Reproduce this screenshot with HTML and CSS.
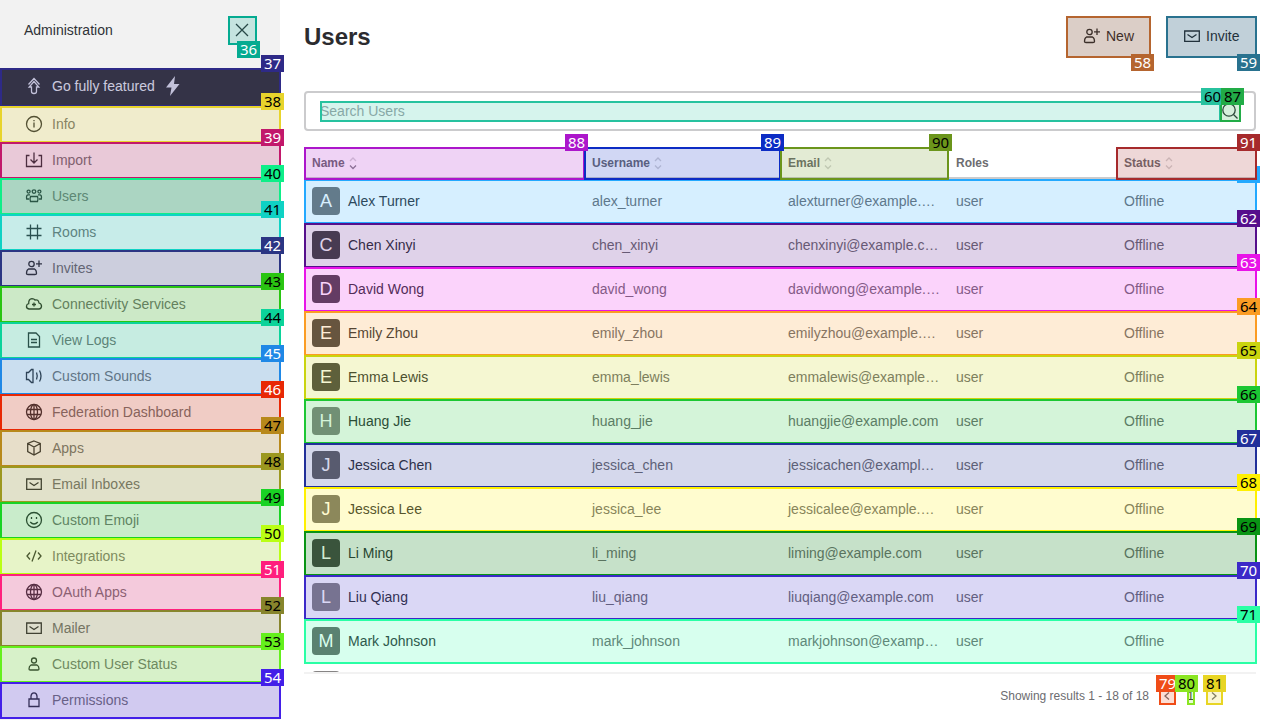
FILE: index.html
```html
<!DOCTYPE html>
<html lang="en">
<head>
<meta charset="utf-8">
<meta name="viewport" content="width=device-width, initial-scale=1">
<title>Users</title>
<link rel="stylesheet" href="styles.css">
</head>
<body>
<svg class="sprite" aria-hidden="true">
  <symbol id="close" viewBox="0 0 20 20"><path d="M4 4l12 12M16 4L4 16"/></symbol>
  <symbol id="upgrade" viewBox="0 0 20 20"><path d="M10 5.500l-4.800 5.500h2.300v4.500q0 2 2.500 2t2.500-2V11h2.300zM4.500 8.500L10 2.500l5.500 6"/></symbol>
  <symbol id="bolt" viewBox="0 0 20 20"><path class="solid" d="M12 0L3 11.500h5.500L7 20l9.500-12H11z"/></symbol>
  <symbol id="info" viewBox="0 0 20 20"><circle cx="10" cy="10" r="7.500"/><path d="M10 8.500v5M10 6v1.200"/></symbol>
  <symbol id="import" viewBox="0 0 20 20"><path d="M5.500 5.500H2.500v11h15v-11h-3M10 2.500v10.500M6.500 9.500L10 13l3.500-3.500"/></symbol>
  <symbol id="team" viewBox="0 0 20 20"><circle cx="4.600" cy="5.600" r="1.500"/><circle cx="10" cy="5.600" r="1.800"/><circle cx="15.400" cy="5.600" r="1.500"/><path d="M6.500 15.500q-1-2.500 0-5h7q1 2.500 0 5zM5 13H2.700Q2 9 4 8.800h2M15 13h2.300q.7-4-1.300-4.200h-2"/></symbol>
  <symbol id="hash" viewBox="0 0 20 20"><path d="M6.500 2.500v15M13.500 2.500v15M2.500 6.500h15M2.500 13.500h15"/></symbol>
  <symbol id="user-plus" viewBox="0 0 20 20"><circle cx="7.500" cy="6" r="2.700"/><path d="M4.500 11h6q2 1 2 4.500 0 1-1.500 1H4q-1.500 0-1.500-1Q2.500 12 4.500 11zM15 2.500v6.500M12 5.800h6"/></symbol>
  <symbol id="cloud" viewBox="0 0 20 20"><path d="M5 15Q2.200 14.500 2.500 12q.2-2 2.200-2.400Q4.500 5 8 4.700q2 0 3 1.300 3.300-.8 4 3 2.700.8 2.500 3.500-.5 2.500-2.500 2.500zM10 8.500v4M8 10.500h4"/></symbol>
  <symbol id="doc" viewBox="0 0 20 20"><path d="M4.500 3h7.500l3.500 3.500V17h-11zM7 9.500h6M7 12.500h6"/></symbol>
  <symbol id="sound" viewBox="0 0 20 20"><path d="M2.500 6.500h2L7.500 3.500H9v13H7.500l-3-3h-2zM12.500 6.500q1.500 3.500 0 7M15.500 4.500q3 5.500 0 11"/></symbol>
  <symbol id="globe" viewBox="0 0 20 20"><circle cx="10" cy="10" r="7.500"/><ellipse cx="10" cy="10" rx="3.500" ry="7.500"/><path d="M3 7.500h14M3 12.500h14M10 2.500v15"/></symbol>
  <symbol id="cube" viewBox="0 0 20 20"><path d="M10 3l6.300 2.500v8L10 17l-6.300-3.500v-8zM3.700 5.500L10 9l6.300-3.500M10 9v8"/></symbol>
  <symbol id="mail" viewBox="0 0 20 20"><path d="M2.700 5h14.600v10.300H2.700zM5.500 8.500l4.500 3 4.500-3"/></symbol>
  <symbol id="smile" viewBox="0 0 20 20"><circle cx="10" cy="10" r="7.500"/><path d="M7.500 7v2M12.500 7v2M6.200 12q3.800 4 7.600 0"/></symbol>
  <symbol id="code" viewBox="0 0 20 20"><path d="M6 6.500L3 10l3 3.500M14 6.500l3 3.500-3 3.500M12 4.500l-4 11"/></symbol>
  <symbol id="user" viewBox="0 0 20 20"><circle cx="10" cy="6.500" r="2.500"/><path d="M7 11h6q2 1 2 4 0 1-1.200 1H6.200Q5 16 5 15q0-3 2-4z"/></symbol>
  <symbol id="lock" viewBox="0 0 20 20"><path d="M5 9h10v7.500H5zM7 9V6q.3-3.200 3-3.200T13 6v3"/></symbol>
  <symbol id="search" viewBox="0 0 20 20"><circle cx="9" cy="9" r="6.200"/><path d="M13.500 13.500l4 4"/></symbol>
  <symbol id="left" viewBox="0 0 16 16"><path d="M10 4.500L6 8l4 3.500"/></symbol>
  <symbol id="right" viewBox="0 0 16 16"><path d="M6 4.500L10 8l-4 3.500"/></symbol>
  <symbol id="sort-up" viewBox="0 0 16 16"><path d="M5 6l3-3 3 3"/></symbol>
  <symbol id="sort-down" viewBox="0 0 16 16"><path d="M5 10.500l3 3 3-3"/></symbol>
</svg>

<aside class="sidebar">
  <header class="sidebar-head">
    <span>Administration</span>
    <button class="close mark mark-below m36" type="button" aria-label="Close"><svg class="icon"><use href="#close"/></svg><span class="tag">36</span></button>
  </header>
  <nav class="menu">
    <a href="#" class="item upgrade mark m37"><svg class="icon"><use href="#upgrade"/></svg>Go fully featured<svg class="icon"><use href="#bolt"/></svg><span class="tag">37</span></a>
    <a href="#" class="item mark m38"><svg class="icon"><use href="#info"/></svg>Info<span class="tag">38</span></a>
    <a href="#" class="item mark m39"><svg class="icon"><use href="#import"/></svg>Import<span class="tag">39</span></a>
    <a href="#" class="item active mark m40" aria-current="page"><svg class="icon"><use href="#team"/></svg>Users<span class="tag">40</span></a>
    <a href="#" class="item mark m41"><svg class="icon"><use href="#hash"/></svg>Rooms<span class="tag">41</span></a>
    <a href="#" class="item mark m42"><svg class="icon"><use href="#user-plus"/></svg>Invites<span class="tag">42</span></a>
    <a href="#" class="item mark m43"><svg class="icon"><use href="#cloud"/></svg>Connectivity Services<span class="tag">43</span></a>
    <a href="#" class="item mark m44"><svg class="icon"><use href="#doc"/></svg>View Logs<span class="tag">44</span></a>
    <a href="#" class="item mark m45"><svg class="icon"><use href="#sound"/></svg>Custom Sounds<span class="tag">45</span></a>
    <a href="#" class="item mark m46"><svg class="icon"><use href="#globe"/></svg>Federation Dashboard<span class="tag">46</span></a>
    <a href="#" class="item mark m47"><svg class="icon"><use href="#cube"/></svg>Apps<span class="tag">47</span></a>
    <a href="#" class="item mark m48"><svg class="icon"><use href="#mail"/></svg>Email Inboxes<span class="tag">48</span></a>
    <a href="#" class="item mark m49"><svg class="icon"><use href="#smile"/></svg>Custom Emoji<span class="tag">49</span></a>
    <a href="#" class="item mark m50"><svg class="icon"><use href="#code"/></svg>Integrations<span class="tag">50</span></a>
    <a href="#" class="item mark m51"><svg class="icon"><use href="#globe"/></svg>OAuth Apps<span class="tag">51</span></a>
    <a href="#" class="item mark m52"><svg class="icon"><use href="#mail"/></svg>Mailer<span class="tag">52</span></a>
    <a href="#" class="item mark m53"><svg class="icon"><use href="#user"/></svg>Custom User Status<span class="tag">53</span></a>
    <a href="#" class="item mark m54"><svg class="icon"><use href="#lock"/></svg>Permissions<span class="tag">54</span></a>
  </nav>
</aside>

<main class="page">
  <header class="page-head">
    <h1>Users</h1>
    <div class="actions">
      <button class="action mark mark-below m58" type="button"><svg class="icon"><use href="#user-plus"/></svg>New<span class="tag">58</span></button>
      <button class="action invite mark mark-below m59" type="button"><svg class="icon"><use href="#mail"/></svg>Invite<span class="tag">59</span></button>
    </div>
  </header>

  <div class="search">
    <span class="search-field mark m60"><input type="text" placeholder="Search Users" aria-label="Search Users"><span class="tag">60</span></span>
    <span class="search-icon mark m87"><svg class="icon"><use href="#search"/></svg><span class="tag">87</span></span>
  </div>

  <div class="results">
    <table>
      <colgroup><col class="c-name"><col class="c-username"><col class="c-email"><col class="c-roles"><col class="c-status"></colgroup>
      <thead>
        <tr>
          <th class="mark m88 sorted">Name<svg class="sort"><use href="#sort-up"/><use class="down" href="#sort-down"/></svg><span class="tag">88</span></th>
          <th class="mark m89">Username<svg class="sort"><use href="#sort-up"/><use class="down" href="#sort-down"/></svg><span class="tag">89</span></th>
          <th class="mark m90">Email<svg class="sort"><use href="#sort-up"/><use class="down" href="#sort-down"/></svg><span class="tag">90</span></th>
          <th>Roles</th>
          <th class="mark m91">Status<svg class="sort"><use href="#sort-up"/><use class="down" href="#sort-down"/></svg><span class="tag">91</span></th>
        </tr>
      </thead>
      <tbody>
        <tr class="mark m61"><td><div class="person"><span class="avatar tone-e">A</span>Alex Turner</div></td><td>alex_turner</td><td>alexturner@example.com</td><td>user</td><td>Offline<span class="tag">61</span></td></tr>
        <tr class="mark m62"><td><div class="person"><span class="avatar tone-a">C</span>Chen Xinyi</div></td><td>chen_xinyi</td><td>chenxinyi@example.com</td><td>user</td><td>Offline<span class="tag">62</span></td></tr>
        <tr class="mark m63"><td><div class="person"><span class="avatar tone-a">D</span>David Wong</div></td><td>david_wong</td><td>davidwong@example.com</td><td>user</td><td>Offline<span class="tag">63</span></td></tr>
        <tr class="mark m64"><td><div class="person"><span class="avatar tone-a">E</span>Emily Zhou</div></td><td>emily_zhou</td><td>emilyzhou@example.com</td><td>user</td><td>Offline<span class="tag">64</span></td></tr>
        <tr class="mark m65"><td><div class="person"><span class="avatar tone-a">E</span>Emma Lewis</div></td><td>emma_lewis</td><td>emmalewis@example.com</td><td>user</td><td>Offline<span class="tag">65</span></td></tr>
        <tr class="mark m66"><td><div class="person"><span class="avatar tone-f">H</span>Huang Jie</div></td><td>huang_jie</td><td>huangjie@example.com</td><td>user</td><td>Offline<span class="tag">66</span></td></tr>
        <tr class="mark m67"><td><div class="person"><span class="avatar tone-d">J</span>Jessica Chen</div></td><td>jessica_chen</td><td>jessicachen@example.com</td><td>user</td><td>Offline<span class="tag">67</span></td></tr>
        <tr class="mark m68"><td><div class="person"><span class="avatar tone-e">J</span>Jessica Lee</div></td><td>jessica_lee</td><td>jessicalee@example.com</td><td>user</td><td>Offline<span class="tag">68</span></td></tr>
        <tr class="mark m69 focused"><td><div class="person"><span class="avatar tone-a">L</span>Li Ming</div></td><td>li_ming</td><td>liming@example.com</td><td>user</td><td>Offline<span class="tag">69</span></td></tr>
        <tr class="mark m70"><td><div class="person"><span class="avatar tone-f">L</span>Liu Qiang</div></td><td>liu_qiang</td><td>liuqiang@example.com</td><td>user</td><td>Offline<span class="tag">70</span></td></tr>
        <tr class="mark m71"><td><div class="person"><span class="avatar tone-d">M</span>Mark Johnson</div></td><td>mark_johnson</td><td>markjohnson@example.com</td><td>user</td><td>Offline<span class="tag">71</span></td></tr>
        <tr><td><div class="person"><span class="avatar tone-f"></span></div></td><td></td><td></td><td></td><td></td></tr>
      </tbody>
    </table>
  </div>

  <footer class="pager">
    <span>Showing results 1 - 18 of 18</span>
    <nav class="pages" aria-label="Pagination">
      <button class="mark m79" type="button" aria-label="Previous"><svg class="chevron"><use href="#left"/></svg><span class="tag">79</span></button>
      <button class="current mark m80" type="button">1<span class="tag">80</span></button>
      <button class="mark m81" type="button" aria-label="Next"><svg class="chevron"><use href="#right"/></svg><span class="tag">81</span></button>
    </nav>
  </footer>
</main>
</body>
</html>
```
FILE: styles.css
```css
* { box-sizing: border-box; }

body {
  margin: 0;
  height: 100vh;
  display: flex;
  overflow: hidden;
  background: #fff;
  color: #2f3237;
  font: 14px/20px "Liberation Sans", Arial, sans-serif;
}

button, input { font: inherit; color: inherit; margin: 0; padding: 0; border: 0; background: none; }
a { color: inherit; text-decoration: none; }

.sprite { position: absolute; width: 0; height: 0; }
.icon, .sort, .chevron { flex: none; fill: none; stroke: currentColor; stroke-width: 1.3; }
.icon { width: 20px; height: 20px; }
.solid { fill: currentColor; stroke: none; }

/* Numbered outlines */
.mark { position: relative; }
.mark::after {
  content: "";
  position: absolute;
  inset: 0 -1px -1px 0;
  border: 2px solid var(--mark);
  background: color-mix(in srgb, var(--mark) 19%, transparent);
  background-clip: padding-box;
  pointer-events: none;
}
.tag {
  position: absolute;
  z-index: 1;
  top: -13px;
  right: -4px;
  width: 23px;
  height: 17px;
  background: var(--mark);
  color: var(--ink, #000);
  font: 15px/16px "Noto Sans", "Liberation Sans", sans-serif;
  text-align: center;
}
.mark-below .tag { top: auto; bottom: -14px; }

/* Sidebar */
.sidebar { flex: none; width: 280px; background: #f2f2f2; position: relative; z-index: 1; }
.sidebar-head { display: flex; align-items: flex-start; justify-content: space-between; height: 68px; padding: 16px 24px; line-height: 28px; }
.close { display: flex; align-items: center; justify-content: center; width: 28px; height: 28px; }
.item { display: flex; align-items: center; gap: 8px; height: 36px; padding: 0 24px; color: #707070; }
.item .icon { color: #303236; }
.upgrade { height: 38px; padding-bottom: 2px; background: #353539; color: #eeeef2; }
.upgrade .icon { color: #e4e4ee; }
.active { background: #cfcfcf; }

/* Page */
.page { flex: 1; min-width: 0; display: flex; flex-direction: column; padding: 16px 24px 0; }
.page-head { display: flex; align-items: center; justify-content: space-between; margin-bottom: 34px; }
h1 { margin: 0; font-size: 24px; line-height: 32px; color: #2b2b2f; }
.actions { display: flex; gap: 16px; }
.action { display: flex; align-items: center; gap: 4px; height: 41px; padding: 0 16px 2px; background: #e4e7ea; color: #1f2329; }
.invite { min-width: 90px; }

.search { display: flex; padding: 8px 14px; border: 2px solid #cbcbcd; border-radius: 4px; margin-bottom: 16px; }
.search-field { flex: 1; height: 20px; }
.search-field input { display: block; width: 100%; height: 20px; outline: 0; }
.search-field input::placeholder { color: #9ea2a8; opacity: 1; }
.search-icon { display: flex; height: 20px; }

.results { flex: 1; min-height: 0; clip-path: inset(-16px -8px 0 -8px); }
table { width: 100%; table-layout: fixed; border-collapse: separate; border-spacing: 0; }
.c-name { width: 280px; }
.c-username { width: 196px; }
.c-email, .c-roles { width: 168px; }
.c-status { width: 140px; }
thead { position: relative; z-index: 2; }
th {
  height: 32px;
  padding: 2px 8px 0;
  background: #fff;
  border-bottom: 2px solid #cbcbcd;
  color: #6c6c70;
  font-size: 12px;
  line-height: 16px;
  text-align: left;
}
th.mark::after { inset: 0 -1px -3px 0; }
.sort { width: 16px; height: 16px; vertical-align: middle; color: #d4d4d6; }
.sorted .down { color: #85858a; }
td { height: 44px; padding: 0 8px; color: #6c6c70; overflow: hidden; text-overflow: ellipsis; white-space: nowrap; }
.focused { background: #f2f3f3; }
.person { display: flex; align-items: center; gap: 8px; color: #2f3237; }
.avatar { width: 28px; height: 28px; border-radius: 4px; color: #fff; font-size: 18px; line-height: 28px; text-align: center; }
.tone-a { background: #464646; }
.tone-d { background: #666566; }
.tone-e { background: #727070; }
.tone-f { background: #868484; }

.pager { display: flex; align-items: center; justify-content: flex-end; gap: 10px; height: 48px; padding: 0 34px 2px 0; border-top: 2px solid #f2f2f2; color: #6c6c70; font-size: 12px; line-height: 16px; }
.pages { display: flex; gap: 12px; }
.pages button { height: 16px; }
.current { width: 7px; color: #2f343d; }
.chevron { display: block; width: 16px; height: 16px; }

.m36 { --mark: #05ab91; --ink: #fff; }
.m37 { --mark: #2e2a87; --ink: #fff; }
.m38 { --mark: #e8d42c; }
.m39 { --mark: #c2186b; --ink: #fff; }
.m40 { --mark: #0eee88; }
.m41 { --mark: #0fd2c4; }
.m42 { --mark: #2b3583; --ink: #fff; }
.m43 { --mark: #2ac512; }
.m44 { --mark: #0bd39a; }
.m45 { --mark: #1f88e6; --ink: #fff; }
.m46 { --mark: #e82805; --ink: #fff; }
.m47 { --mark: #b8891b; }
.m48 { --mark: #9c981f; }
.m49 { --mark: #19d324; }
.m50 { --mark: #baff14; }
.m51 { --mark: #ff1f7d; --ink: #fff; }
.m52 { --mark: #87852c; }
.m53 { --mark: #64f01c; }
.m54 { --mark: #431fe8; --ink: #fff; }
.m58 { --mark: #b5652f; --ink: #fff; }
.m59 { --mark: #29728f; --ink: #fff; }
.m60 { --mark: #27c29f; }
.m61 { --mark: #23a9ff; --ink: #fff; }
.m62 { --mark: #560f8c; --ink: #fff; }
.m63 { --mark: #e813e8; --ink: #fff; }
.m64 { --mark: #fb9c24; }
.m65 { --mark: #cad40f; }
.m66 { --mark: #1cc733; }
.m67 { --mark: #22309a; --ink: #fff; }
.m68 { --mark: #fff000; }
.m69 { --mark: #099414; }
.m70 { --mark: #3b29c8; --ink: #fff; }
.m71 { --mark: #29ffa5; }
.m79 { --mark: #f04c17; --ink: #fff; }
.m80 { --mark: #8ae522; }
.m81 { --mark: #e8d524; }
.m87 { --mark: #22ac47; }
.m88 { --mark: #ac16cb; --ink: #fff; }
.m89 { --mark: #0c2cc4; --ink: #fff; }
.m90 { --mark: #6b951b; }
.m91 { --mark: #a62a2c; --ink: #fff; }
```
